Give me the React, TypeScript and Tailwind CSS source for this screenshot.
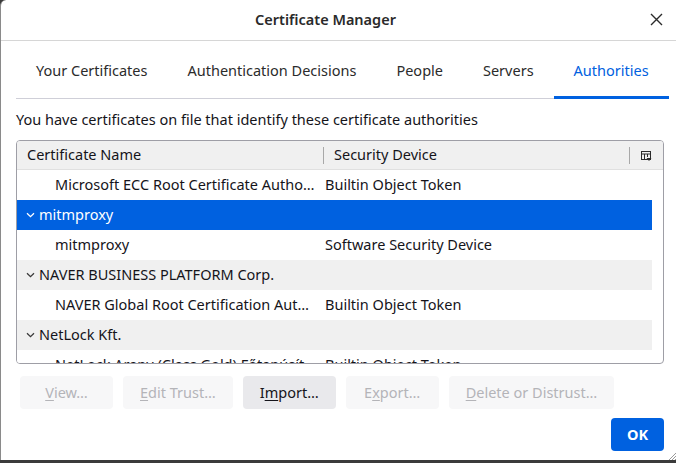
import React from 'react';

const font = { fontFamily: '"Noto Sans", "Open Sans", sans-serif' };

type Row = {
  kind: 'group' | 'cert';
  name: string;
  device?: string;
  selected?: boolean;
};

const rows: Row[] = [
  { kind: 'cert', name: 'Microsoft ECC Root Certificate Autho…', device: 'Builtin Object Token' },
  { kind: 'group', name: 'mitmproxy', selected: true },
  { kind: 'cert', name: 'mitmproxy', device: 'Software Security Device' },
  { kind: 'group', name: 'NAVER BUSINESS PLATFORM Corp.' },
  { kind: 'cert', name: 'NAVER Global Root Certification Aut…', device: 'Builtin Object Token' },
  { kind: 'group', name: 'NetLock Kft.' },
  { kind: 'cert', name: 'NetLock Arany (Class Gold) Főtanúsít…', device: 'Builtin Object Token' },
];

const tabs = ['Your Certificates', 'Authentication Decisions', 'People', 'Servers', 'Authorities'];

const Chevron = ({ white }: { white?: boolean }) => (
  <svg width="9" height="6" viewBox="0 0 9 6" className="shrink-0">
    <path d="M1 1.2 L4.5 4.6 L8 1.2" fill="none" stroke={white ? '#ffffff' : '#3a3a3a'} strokeWidth="1.3" />
  </svg>
);

const ColumnPicker = () => (
  <svg width="11" height="11" viewBox="0 0 11 11">
    <rect x="0.5" y="0.5" width="9" height="8" fill="none" stroke="#2b2b2b" strokeWidth="1" />
    <path d="M0.5 3 H9.5 M3.5 3 V8.5 M6.5 3 V6" stroke="#2b2b2b" strokeWidth="1" />
    <path d="M5.5 7 H10.5 L8 10 Z" fill="#2b2b2b" />
  </svg>
);

const Btn = ({
  label,
  accessKey,
  disabled,
}: {
  label: string;
  accessKey: number;
  disabled?: boolean;
}) => (
  <button
    className={`h-[33px] min-w-[93px] px-[17px] rounded-[4px] text-[14.5px] whitespace-nowrap ${
      disabled ? 'bg-[#f7f7f8] text-[#b4b4b8]' : 'bg-[#e9e9ec] text-[#15141a]'
    }`}
  >
    {label.slice(0, accessKey)}
    <span className="underline underline-offset-2">{label[accessKey]}</span>
    {label.slice(accessKey + 1)}
  </button>
);

export default function App() {
  return (
    <div className="w-[676px] h-[463px] bg-[#3b3b3b] overflow-hidden text-[#15141a]" style={font}>
      <div className="h-[460px] bg-white border-l border-[#8a8a8a] rounded-tl-[6px] flex flex-col relative">
        {/* title bar */}
        <div className="h-[41px] shrink-0 border-b border-[#d6d6d6] flex items-center justify-center relative">
          <span className="text-[14.5px] font-semibold text-[#2a2a2a] -ml-[26px]">Certificate Manager</span>
          <button className="absolute right-[13px] top-[13px] w-[13px] h-[13px]">
            <svg width="13" height="13" viewBox="0 0 13 13">
              <path d="M1 1 L12 12 M12 1 L1 12" stroke="#2b2b2b" strokeWidth="1.4" />
            </svg>
          </button>
        </div>

        <div className="flex flex-col pl-[15px] pr-[9px]">
          {/* tabs */}
          <div className="flex h-[58px] border-b border-[#cfcfd8] w-[652px]">
            {tabs.map((t) => {
              const active = t === 'Authorities';
              return (
                <div
                  key={t}
                  className={`px-5 flex items-center whitespace-nowrap text-[14.5px] ${
                    active ? 'text-[#0061e0] border-b-[3px] border-[#0061e0] -mb-px pt-[4px]' : 'text-[#2b2b2b] pt-[2px]'
                  }`}
                >
                  {t}
                </div>
              );
            })}
          </div>

          <p className="mt-[10px] h-[21px] leading-[21px] text-[14.5px] text-[#15141a] whitespace-nowrap">
            You have certificates on file that identify these certificate authorities
          </p>

          {/* tree */}
          <div className="mt-[10px] w-[648px] h-[224px] border border-[#9e9ea6] rounded-[4px] overflow-hidden">
            <div className="h-[29px] bg-[#f0f0f0] flex items-center text-[14.5px] border-b border-[#e0e0e0]">
              <div className="w-[306px] pl-[10px] flex items-center">Certificate Name</div>
              <div className="w-px h-[17px] bg-[#a8a8a8]" />
              <div className="flex-1 pl-[10px]">Security Device</div>
              <div className="w-px h-[17px] bg-[#a8a8a8]" />
              <div className="w-[33px] flex justify-center pt-[2px]">
                <ColumnPicker />
              </div>
            </div>
            <div className="w-[635px]">
              {rows.map((r, i) => (
                <div
                  key={i}
                  className={`h-[30px] flex items-center text-[14.5px] whitespace-nowrap ${
                    r.selected ? 'bg-[#0061e0] text-white' : r.kind === 'group' ? 'bg-[#f0f0f0]' : 'bg-white'
                  }`}
                >
                  {r.kind === 'group' ? (
                    <div className="flex items-center gap-[4px] pl-[9px]">
                      <Chevron white={r.selected} />
                      <span>{r.name}</span>
                    </div>
                  ) : (
                    <>
                      <div className="w-[308px] pl-[38px] overflow-hidden">{r.name}</div>
                      <div className="flex-1 overflow-hidden">{r.device}</div>
                    </>
                  )}
                </div>
              ))}
            </div>
          </div>

          {/* action buttons */}
          <div className="mt-[12px] pl-[4px] flex gap-[10px]">
            <Btn label="View…" accessKey={0} disabled />
            <Btn label="Edit Trust…" accessKey={0} disabled />
            <Btn label="Import…" accessKey={1} />
            <Btn label="Export…" accessKey={1} disabled />
            <Btn label="Delete or Distrust…" accessKey={0} disabled />
          </div>

          <div className="mt-[9px] flex justify-end w-[648px]">
            <button className="h-[33px] w-[53px] rounded-[4px] bg-[#0061e0] text-white text-[14.5px] font-bold">
              OK
            </button>
          </div>
        </div>

        <svg className="absolute right-0 bottom-0" width="8" height="8" viewBox="0 0 8 8">
          <path d="M8 1 L1 8 M8 4 L4 8 M8 7 L7 8" stroke="#9a9a9a" strokeWidth="1" />
        </svg>
      </div>
    </div>
  );
}
